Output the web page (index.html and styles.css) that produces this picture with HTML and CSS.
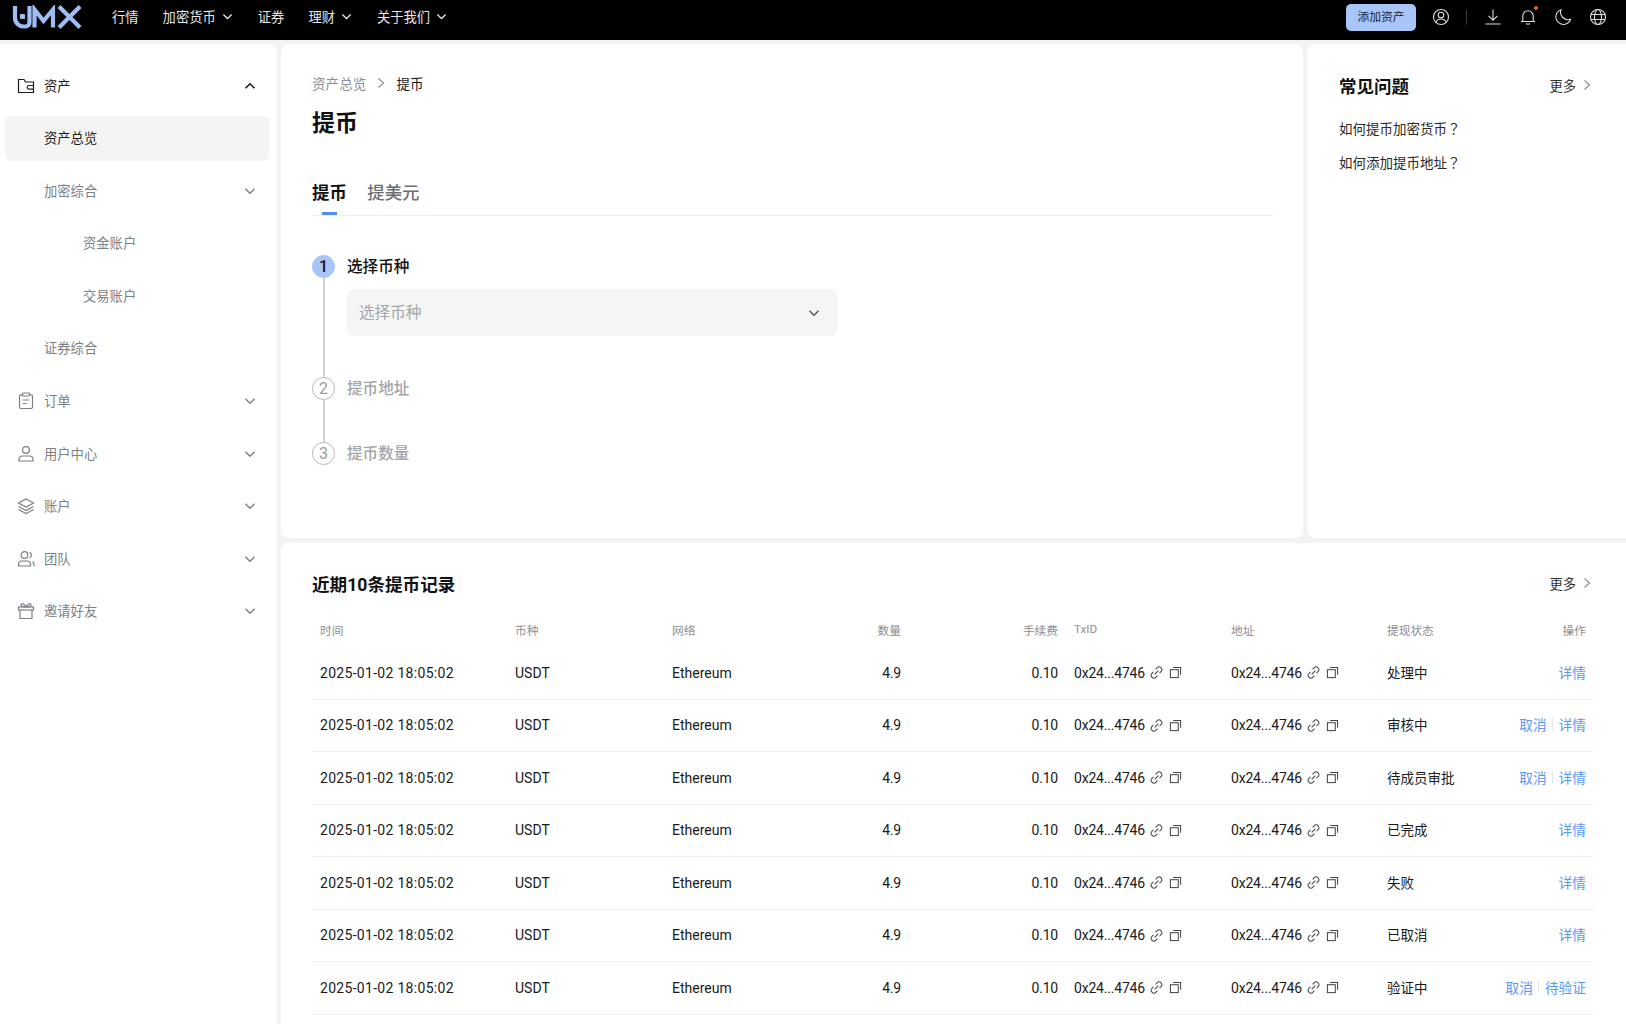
FILE: index.html
```html
<!DOCTYPE html>
<html lang="zh-CN">
<head>
<meta charset="utf-8">
<title>提币</title>
<link rel="stylesheet" href="styles.css">
</head>
<body>
<svg class="defs" width="0" height="0" aria-hidden="true">
  <symbol id="i-down" viewBox="0 0 12 12"><path d="M1.5 3.8 6 8.2l4.5-4.4" fill="none" stroke="currentColor" stroke-width="1.4"/></symbol>
  <symbol id="i-up" viewBox="0 0 12 12"><path d="M1.5 8.2 6 3.8l4.5 4.4" fill="none" stroke="currentColor" stroke-width="1.6"/></symbol>
  <symbol id="i-right" viewBox="0 0 12 12"><path d="M3.5 1.5 8.5 6l-5 4.5" fill="none" stroke="currentColor" stroke-width="1.2"/></symbol>
  <symbol id="i-link" viewBox="0 0 14 14"><g fill="none" stroke="currentColor" stroke-width="1.1"><path d="M6 3.6 7.8 1.8a2.6 2.6 0 0 1 3.9 0l.4.4a2.6 2.6 0 0 1 0 3.7L10.2 7.8"/><path d="M8 10.4 6.2 12.2a2.6 2.6 0 0 1-3.9 0l-.4-.4a2.6 2.6 0 0 1 0-3.7L3.8 6.2"/><path d="M5 9l4-4"/></g></symbol>
  <symbol id="i-copy" viewBox="0 0 14 14"><g fill="none" stroke="currentColor" stroke-width="1.1"><rect x="1.5" y="4" width="8.5" height="8.5"/><path d="M4.5 1.500h8v8"/></g></symbol>
  <symbol id="i-wallet" viewBox="0 0 18 18"><g fill="none" stroke="currentColor" stroke-width="1.2"><path d="M1.500 15.500V2.500h5.500l1.500 2.500h8v10.500z"/><path d="M16.500 8.500h-4.500a1.800 1.800 0 0 0 0 3.600h4.500"/></g></symbol>
  <symbol id="i-order" viewBox="0 0 18 18"><g fill="none" stroke="currentColor" stroke-width="1.2"><rect x="2.500" y="2.800" width="13" height="13.700" rx="1.500"/><rect x="5.500" y="1" width="7" height="3" rx=".8" fill="#fff"/><path d="M5.800 8h6.400M5.800 11.500h4"/></g></symbol>
  <symbol id="i-user" viewBox="0 0 18 18"><g fill="none" stroke="currentColor" stroke-width="1.2"><circle cx="9" cy="5" r="3.400"/><path d="M2 16v-1.500A3.500 3.500 0 0 1 5.500 11h7a3.500 3.500 0 0 1 3.500 3.500V16z"/></g></symbol>
  <symbol id="i-layers" viewBox="0 0 18 18"><g fill="none" stroke="currentColor" stroke-width="1.2"><path d="M9 2 16.500 6 9 10 1.500 6z"/><path d="M1.500 9.500 9 13.500l7.500-4"/><path d="M1.500 12.500 9 16.500l7.500-4"/></g></symbol>
  <symbol id="i-team" viewBox="0 0 18 18"><g fill="none" stroke="currentColor" stroke-width="1.2"><circle cx="7.500" cy="5" r="3.300"/><path d="M1.500 16v-1.500A3.500 3.500 0 0 1 5 11h5a3.500 3.500 0 0 1 3.500 3.500V16z"/><path d="M12.500 2a3.300 3.300 0 0 1 0 6M15.500 11.500a3.500 3.500 0 0 1 1.500 3V16"/></g></symbol>
  <symbol id="i-gift" viewBox="0 0 18 18"><g fill="none" stroke="currentColor" stroke-width="1.2"><path d="M3 8v8.500h12V8"/><rect x="1.500" y="5" width="15" height="3"/><path d="M9 5C7.500 1.500 4 1 4 3s3 2 5 2zM9 5c1.500-3.500 5-4 5-2s-3 2-5 2z"/></g></symbol>
  <symbol id="i-account" viewBox="0 0 18 18"><g fill="none" stroke="currentColor" stroke-width="1.1"><circle cx="9" cy="9" r="7.500"/><circle cx="9" cy="7" r="2.800"/><path d="M3.800 14.200C5 11.800 6.800 11 9 11s4 .8 5.200 3.200"/></g></symbol>
  <symbol id="i-download" viewBox="0 0 18 18"><g fill="none" stroke="currentColor" stroke-width="1.1"><path d="M9 1.500v10.500M4.500 7.800 9 12.200l4.500-4.400M1.500 16h15"/></g></symbol>
  <symbol id="i-bell" viewBox="0 0 18 18"><g fill="none" stroke="currentColor" stroke-width="1.1"><path d="M2 13.500h14M3.800 13.500V8a5.200 5.200 0 0 1 10.400 0v5.500"/><path d="M7 16h4"/></g></symbol>
  <symbol id="i-moon" viewBox="0 0 18 18"><path d="M7 1.800a7.500 7.500 0 1 0 9.500 9.500A7.500 7.500 0 0 1 7 1.800z" fill="none" stroke="currentColor" stroke-width="1.1"/></symbol>
  <symbol id="i-globe" viewBox="0 0 18 18"><g fill="none" stroke="currentColor" stroke-width="1.1"><circle cx="9" cy="9" r="7.500"/><ellipse cx="9" cy="9" rx="3.500" ry="7.500"/><path d="M2 6.500h14M2 11.500h14"/></g></symbol>
</svg>

<header class="topbar">
  <svg class="logo" viewBox="0 0 70 24" aria-label="UMX"><g fill="none" stroke="#9dbdf3" stroke-width="4.200"><path d="M3 1v12a8.500 8.500 0 0 0 8.500 8.500h2a4 4 0 0 0 4-4V1"/><path d="M22.500 22.500V4.500l9 11.500L41 4.500v18"/><path d="M47 1.500 68 22.500M68 1.500 47 22.500"/></g><rect x="8" y="9" width="5" height="5" rx="1" fill="#9dbdf3"/></svg>
  <nav class="nav">
    <span class="nav-item">行情</span>
    <span class="nav-item">加密货币<svg class="chev-nav"><use href="#i-down"/></svg></span>
    <span class="nav-item">证券</span>
    <span class="nav-item">理财<svg class="chev-nav"><use href="#i-down"/></svg></span>
    <span class="nav-item">关于我们<svg class="chev-nav"><use href="#i-down"/></svg></span>
  </nav>
  <div class="tools">
    <button class="add-btn">添加资产</button>
    <svg class="tool tool-account"><use href="#i-account"/></svg>
    <span class="tool-sep"></span>
    <svg class="tool tool-download"><use href="#i-download"/></svg>
    <span class="bell-wrap"><svg class="tool"><use href="#i-bell"/></svg><i class="bell-dot"></i></span>
    <svg class="tool"><use href="#i-moon"/></svg>
    <svg class="tool"><use href="#i-globe"/></svg>
  </div>
</header>

<div class="shell">
  <aside class="sidebar">
    <div class="side-row strong"><svg class="side-icon"><use href="#i-wallet"/></svg><span class="side-label">资产</span><svg class="side-chev"><use href="#i-up"/></svg></div>
    <div class="side-row strong active"><span class="side-label indent">资产总览</span></div>
    <div class="side-row"><span class="side-label indent">加密综合</span><svg class="side-chev"><use href="#i-down"/></svg></div>
    <div class="side-row"><span class="side-label indent2">资金账户</span></div>
    <div class="side-row"><span class="side-label indent2">交易账户</span></div>
    <div class="side-row"><span class="side-label indent">证券综合</span></div>
    <div class="side-row"><svg class="side-icon"><use href="#i-order"/></svg><span class="side-label">订单</span><svg class="side-chev"><use href="#i-down"/></svg></div>
    <div class="side-row"><svg class="side-icon"><use href="#i-user"/></svg><span class="side-label">用户中心</span><svg class="side-chev"><use href="#i-down"/></svg></div>
    <div class="side-row"><svg class="side-icon"><use href="#i-layers"/></svg><span class="side-label">账户</span><svg class="side-chev"><use href="#i-down"/></svg></div>
    <div class="side-row"><svg class="side-icon"><use href="#i-team"/></svg><span class="side-label">团队</span><svg class="side-chev"><use href="#i-down"/></svg></div>
    <div class="side-row"><svg class="side-icon"><use href="#i-gift"/></svg><span class="side-label">邀请好友</span><svg class="side-chev"><use href="#i-down"/></svg></div>
  </aside>

  <main class="content">
    <section class="panel withdraw">
      <div class="crumbs"><span class="crumb-muted">资产总览</span><svg class="crumb-sep"><use href="#i-right"/></svg><span class="crumb-now">提币</span></div>
      <h1 class="page-title">提币</h1>
      <div class="tabs">
        <span class="tab tab-on">提币</span>
        <span class="tab">提美元</span>
      </div>
      <div class="steps">
        <div class="step step-first">
          <div class="step-rail"><span class="step-num on">1</span><span class="step-line"></span></div>
          <div class="step-body">
            <div class="step-title on">选择币种</div>
            <div class="select"><span>选择币种</span><svg class="select-chev"><use href="#i-down"/></svg></div>
          </div>
        </div>
        <div class="step step-second">
          <div class="step-rail"><span class="step-num">2</span><span class="step-line"></span></div>
          <div class="step-body"><div class="step-title">提币地址</div></div>
        </div>
        <div class="step">
          <div class="step-rail"><span class="step-num">3</span></div>
          <div class="step-body"><div class="step-title">提币数量</div></div>
        </div>
      </div>
    </section>

    <section class="panel faq">
      <div class="head-row">
        <h2 class="faq-title">常见问题</h2>
        <span class="more">更多<svg class="more-chev"><use href="#i-right"/></svg></span>
      </div>
      <p class="faq-link">如何提币加密货币<span class="q" lang="zh-TW">？</span></p>
      <p class="faq-link">如何添加提币地址<span class="q" lang="zh-TW">？</span></p>
    </section>

    <section class="panel records">
      <div class="head-row">
        <h2 class="rec-title">近期10条提币记录</h2>
        <span class="more">更多<svg class="more-chev"><use href="#i-right"/></svg></span>
      </div>
      <div class="table">
        <div class="row row-head"><span>时间</span><span>币种</span><span>网络</span><span class="r">数量</span><span class="r">手续费</span><span>TxID</span><span>地址</span><span>提现状态</span><span class="r">操作</span></div>

        <div class="row"><span class="time">2025-01-02 18:05:02</span><span class="lat">USDT</span><span class="lat">Ethereum</span><span class="r num">4.9</span><span class="r num">0.10</span><span class="hash">0x24...4746<svg class="hi"><use href="#i-link"/></svg><svg class="hi"><use href="#i-copy"/></svg></span><span class="hash">0x24...4746<svg class="hi"><use href="#i-link"/></svg><svg class="hi"><use href="#i-copy"/></svg></span><span class="status">处理中</span><span class="ops"><a>详情</a></span></div>

        <div class="row"><span class="time">2025-01-02 18:05:02</span><span class="lat">USDT</span><span class="lat">Ethereum</span><span class="r num">4.9</span><span class="r num">0.10</span><span class="hash">0x24...4746<svg class="hi"><use href="#i-link"/></svg><svg class="hi"><use href="#i-copy"/></svg></span><span class="hash">0x24...4746<svg class="hi"><use href="#i-link"/></svg><svg class="hi"><use href="#i-copy"/></svg></span><span class="status">审核中</span><span class="ops"><a>取消</a><i></i><a>详情</a></span></div>

        <div class="row"><span class="time">2025-01-02 18:05:02</span><span class="lat">USDT</span><span class="lat">Ethereum</span><span class="r num">4.9</span><span class="r num">0.10</span><span class="hash">0x24...4746<svg class="hi"><use href="#i-link"/></svg><svg class="hi"><use href="#i-copy"/></svg></span><span class="hash">0x24...4746<svg class="hi"><use href="#i-link"/></svg><svg class="hi"><use href="#i-copy"/></svg></span><span class="status">待成员审批</span><span class="ops"><a>取消</a><i></i><a>详情</a></span></div>

        <div class="row"><span class="time">2025-01-02 18:05:02</span><span class="lat">USDT</span><span class="lat">Ethereum</span><span class="r num">4.9</span><span class="r num">0.10</span><span class="hash">0x24...4746<svg class="hi"><use href="#i-link"/></svg><svg class="hi"><use href="#i-copy"/></svg></span><span class="hash">0x24...4746<svg class="hi"><use href="#i-link"/></svg><svg class="hi"><use href="#i-copy"/></svg></span><span class="status">已完成</span><span class="ops"><a>详情</a></span></div>

        <div class="row"><span class="time">2025-01-02 18:05:02</span><span class="lat">USDT</span><span class="lat">Ethereum</span><span class="r num">4.9</span><span class="r num">0.10</span><span class="hash">0x24...4746<svg class="hi"><use href="#i-link"/></svg><svg class="hi"><use href="#i-copy"/></svg></span><span class="hash">0x24...4746<svg class="hi"><use href="#i-link"/></svg><svg class="hi"><use href="#i-copy"/></svg></span><span class="status">失败</span><span class="ops"><a>详情</a></span></div>

        <div class="row"><span class="time">2025-01-02 18:05:02</span><span class="lat">USDT</span><span class="lat">Ethereum</span><span class="r num">4.9</span><span class="r num">0.10</span><span class="hash">0x24...4746<svg class="hi"><use href="#i-link"/></svg><svg class="hi"><use href="#i-copy"/></svg></span><span class="hash">0x24...4746<svg class="hi"><use href="#i-link"/></svg><svg class="hi"><use href="#i-copy"/></svg></span><span class="status">已取消</span><span class="ops"><a>详情</a></span></div>

        <div class="row"><span class="time">2025-01-02 18:05:02</span><span class="lat">USDT</span><span class="lat">Ethereum</span><span class="r num">4.9</span><span class="r num">0.10</span><span class="hash">0x24...4746<svg class="hi"><use href="#i-link"/></svg><svg class="hi"><use href="#i-copy"/></svg></span><span class="hash">0x24...4746<svg class="hi"><use href="#i-link"/></svg><svg class="hi"><use href="#i-copy"/></svg></span><span class="status">验证中</span><span class="ops"><a>取消</a><i></i><a>待验证</a></span></div>
      </div>
    </section>
  </main>
</div>
</body>
</html>
```
FILE: styles.css
```css
* { box-sizing: border-box; }
html, body { margin: 0; height: 1024px; overflow: hidden; }
body {
  background: #f2f3f5;
  color: #1a1a1a;
  font-family: Roboto, "Noto Sans CJK SC", sans-serif;
  font-size: 13.3px;
}
.defs { position: absolute; }
h1, h2, p { margin: 0; }

/* top bar */
.topbar {
  height: 40px;
  background: #000;
  display: flex;
  align-items: center;
  padding-left: 12px;
}
.logo { width: 70px; height: 24px; margin-top: -6px; flex: none; }
.nav { display: flex; align-items: center; margin-left: 30px; gap: 24px; margin-top: -8px; }
.nav-item { color: #e6e6e6; display: flex; align-items: center; white-space: nowrap; }
.chev-nav { width: 11px; height: 11px; margin: 0 1px 0 6px; }
.tools { margin-left: auto; display: flex; align-items: center; margin-top: -6px; padding-right: 19px; }
.add-btn {
  width: 70px; height: 27px;
  border: 0; border-radius: 5px;
  background: #a8c5f8;
  color: #15233b;
  font: inherit; font-size: 11.8px;
  padding: 0 0 3px;
  margin-right: 16px;
}
.tool { width: 18px; height: 18px; color: #dcdcdc; display: block; }
.tools > .tool { margin-right: 17px; }
.tools > .tool:last-child { margin-right: 0; }
.tools > .tool-account { margin-right: 16px; }
.tool-sep { width: 1px; height: 15px; background: #3a3a3a; margin-right: 17px; }
.bell-wrap { position: relative; margin-right: 17px; }
.bell-dot {
  position: absolute; top: -2px; right: -1px;
  width: 4px; height: 4px; border-radius: 50%;
  background: #f0651e;
}

/* shell */
.shell { display: grid; grid-template-columns: 277px 1fr; gap: 4px; padding-top: 4px; }
.sidebar {
  background: #fff;
  height: 980px;
  border-radius: 0 8px 0 0;
  padding: 19px 8px 0 5px;
}
.side-row {
  height: 45px;
  margin-bottom: 7.6px;
  display: flex;
  align-items: center;
  padding: 0 13px 0 12px;
  color: #7c7f86;
  border-radius: 6px;
}
.side-row.strong { color: #1a1a1a; }
.side-row.active { background: #f4f4f5; }
.side-icon { width: 18px; height: 18px; flex: none; margin-right: 9px; }
.side-label { white-space: nowrap; margin-bottom: 1px; }
.indent { margin-left: 27px; }
.indent2 { margin-left: 66px; }
.side-chev { width: 12px; height: 12px; margin-left: auto; }

.content {
  display: grid;
  grid-template-columns: 1022px 319px;
  grid-template-rows: 494px 481px;
  gap: 5px 4px;
}
.panel { background: #fff; border-radius: 8px; }

/* withdraw */
.withdraw { padding: 30px 30px 0 31px; }
.crumbs { display: flex; align-items: center; height: 18px; font-size: 13.6px; }
.crumb-muted { color: #8b8e95; }
.crumb-sep { width: 12px; height: 12px; margin: 0 9px; color: #8b8e95; }
.crumb-now { color: #1a1a1a; }
.page-title { font-size: 23px; font-weight: 700; line-height: 30px; margin-top: 17px; color: #111; }
.tabs {
  display: flex;
  gap: 20.5px;
  margin-top: 39px;
  height: 38px;
  border-bottom: 1px solid #eceef1;
  font-size: 17.4px;
  line-height: 24px;
  padding-top: 3px;
}
.tab { color: #6c6f76; font-weight: 500; position: relative; }
.tab-on { color: #111; font-weight: 700; }
.tab-on::after {
  content: "";
  position: absolute;
  left: 10px; bottom: 0;
  width: 15px; height: 3px;
  background: #4f8df7;
}
.steps { margin-top: 39px; }
.step { display: flex; gap: 12px; }
.step-first { height: 122px; }
.step-second { height: 65px; }
.step-rail { width: 23px; margin-right: 1px; display: flex; flex-direction: column; align-items: center; flex: none; }
.step-num {
  width: 23px; height: 23px;
  border-radius: 50%;
  border: 1px solid #b6b8bf;
  color: #9a9da4;
  display: flex; align-items: center; justify-content: center;
  font-size: 16px;
  flex: none;
  background: #fff;
}
.step-num.on { background: #a8c5f8; border-color: #a8c5f8; color: #111; font-weight: 500; }
.step-line { flex: 1; width: 2px; background: #cfd1d6; }
.step-body { flex: 1; margin-left: -1px; padding-top: 1px; }
.step-title { font-size: 15.6px; line-height: 23px; color: #a2a5ab; font-weight: 500; }
.step-title.on { color: #111; }
.select {
  width: 491px; height: 47px;
  margin-top: 10px;
  border-radius: 8px;
  background: #f5f5f5;
  display: flex; align-items: center;
  padding: 0 18px 4px 12px;
  color: #a2a5ab;
  font-size: 15.6px;
}
.select-chev { width: 12px; height: 12px; margin-left: auto; color: #555; margin-top: 4px; }

/* faq */
.faq { padding: 28px 33px 0 32px; border-radius: 8px 0 0 8px; }
.head-row { display: flex; align-items: center; justify-content: space-between; height: 26px; }
.faq-title { font-size: 17.5px; font-weight: 700; color: #111; }
.more { display: flex; align-items: center; color: #333; }
.more-chev { width: 12px; height: 12px; margin-left: 5px; color: #8b8e95; }
.faq-link { margin-top: 12px; line-height: 21px; color: #2a2a2a; font-size: 13.5px; }
.head-row + .faq-link { margin-top: 19.5px; }
.q { font-family: "Noto Sans CJK TC", sans-serif; }

/* records */
.records { grid-column: 1 / 3; padding: 27px 33px 0 31px; border-radius: 8px 0 0 0; }
.records .table { margin-right: -1px; }
.rec-title { font-size: 17.6px; font-weight: 700; color: #111; }
.table { margin-top: 17px; }
.row {
  display: grid;
  grid-template-columns: 195px 157px 157px 88px 157px 157px 156px 100px 115px;
  align-items: center;
  height: 52.5px;
  border-bottom: 1px solid #eef0f2;
  white-space: nowrap;
  font-size: 13.5px;
}
.row > span { padding: 0 8px; }
.row-head {
  height: 34px;
  border-bottom: 0;
  color: #8b8e95;
  font-size: 11.7px;
}
.row-head > span { padding-bottom: 2px; }
.r { text-align: right; }
.num { font-size: 14px; letter-spacing: -.2px; }
.time { font-size: 14px; letter-spacing: .3px; }
.lat { font-size: 14px; }
.hash { display: flex; align-items: center; font-size: 14px; letter-spacing: -.2px; }
.hi { width: 13px; height: 13px; margin-left: 5px; color: #444; flex: none; }
.hi + .hi { margin-left: 6px; }
.row > .status { padding-bottom: 2px; }
.row > .ops { display: flex; justify-content: flex-end; align-items: center; color: #5a97f2; font-size: 13.7px; padding-bottom: 2px; }
.ops i { width: 1px; height: 12px; background: #e3e5e8; margin: 0 5.5px; }
```
